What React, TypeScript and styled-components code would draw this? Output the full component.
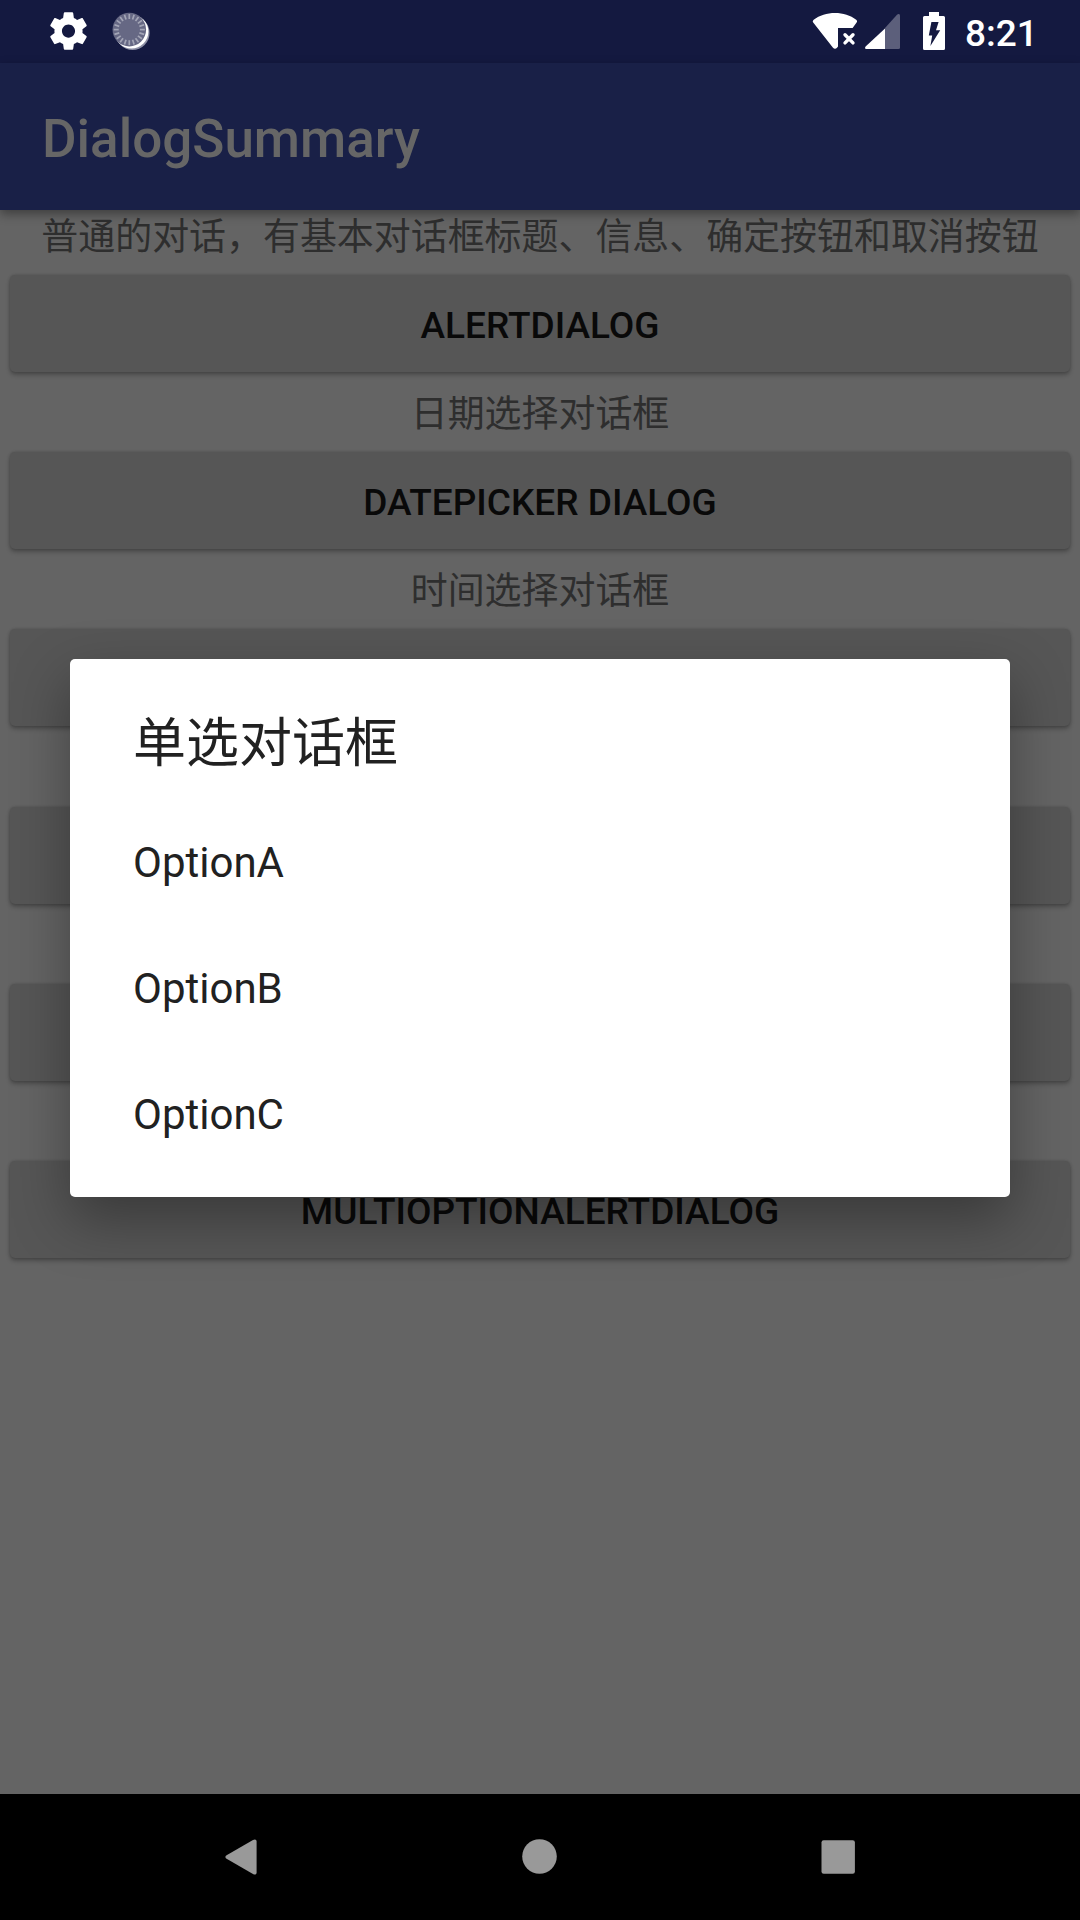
import React from "react";
import styled, { createGlobalStyle } from "styled-components";

const GlobalStyle = createGlobalStyle`
  * { box-sizing: border-box; }
  body {
    margin: 0;
    background: #646464;
    font-family: Roboto, "Noto Sans CJK SC", sans-serif;
  }
`;

const Screen = styled.div`
  position: relative;
  display: flex;
  flex-direction: column;
  width: 1080px;
  height: 1920px;
  overflow: hidden;
  background: #646464;
`;

const StatusBar = styled.header`
  display: flex;
  align-items: flex-start;
  height: 63px;
  padding: 8px 43px 0 46px;
  background: #141940;
`;

const StatusGroup = styled.div<{ $end?: boolean }>`
  display: flex;
  align-items: flex-start;
  margin-left: ${(p) => (p.$end ? "auto" : "0")};
`;

const Glyph = styled.svg<{ $w: number; $h: number; $left?: number }>`
  display: block;
  flex: none;
  width: ${(p) => p.$w}px;
  height: ${(p) => p.$h}px;
  margin-left: ${(p) => p.$left ?? 0}px;
`;

const Clock = styled.span`
  width: 72px;
  margin-left: 19px;
  color: #fff;
  font-size: 37px;
  font-weight: 500;
  line-height: 51px;
  white-space: nowrap;
`;

const AppBar = styled.div`
  display: flex;
  align-items: center;
  position: relative;
  height: 147px;
  padding: 4px 42px 0;
  background: #192047;
  box-shadow: 0 4px 10px rgba(0, 0, 0, 0.38);
`;

const AppTitle = styled.h1`
  margin: 0;
  color: #666;
  font-size: 53px;
  font-weight: 500;
  line-height: 62px;
`;

const Content = styled.main`
  display: flex;
  flex: 1;
  flex-direction: column;
  margin-top: -2px;
  padding: 0 10px;
`;

const Entry = styled.section`
  display: flex;
  flex-direction: column;
  height: 177.2px;
`;

const Label = styled.div`
  height: 67px;
  padding-top: 4px;
  color: #2e2e2e;
  font-size: 36.95px;
  line-height: 51px;
  text-align: center;
  white-space: nowrap;
`;

const RaisedButton = styled.button`
  height: 97px;
  padding: 5px 0 0;
  border: 0;
  border-radius: 5px;
  background: #565656;
  box-shadow: 0 3px 4px rgba(0, 0, 0, 0.25), 0 0 3px rgba(0, 0, 0, 0.18);
  color: #090909;
  font-family: inherit;
  font-size: 37px;
  font-weight: 500;
  line-height: 44px;
`;

const NavBar = styled.nav`
  display: flex;
  align-items: center;
  justify-content: space-between;
  height: 126px;
  padding: 0 222px;
  background: #000;
`;

const Dialog = styled.div`
  position: absolute;
  top: 659px;
  left: 70px;
  width: 940px;
  height: 538px;
  border-radius: 5px;
  background: #fff;
  color: #212121;
  box-shadow: 0 22px 56px rgba(0, 0, 0, 0.34);
`;

const DialogTitle = styled.h2`
  height: 140px;
  margin: 0;
  padding: 46px 63px 0;
  font-size: 53px;
  font-weight: 400;
  line-height: 78px;
`;

const OptionList = styled.ul`
  margin: 0;
  padding: 0;
  list-style: none;
`;

const Option = styled.li`
  display: flex;
  align-items: center;
  height: 126px;
  padding: 0 63px;
  font-size: 42px;
`;

const entries = [
  { label: "普通的对话，有基本对话框标题、信息、确定按钮和取消按钮", button: "ALERTDIALOG" },
  { label: "日期选择对话框", button: "DATEPICKER DIALOG" },
  { label: "时间选择对话框", button: "" },
  { label: "", button: "" },
  { label: "", button: "" },
  { label: "", button: "MULTIOPTIONALERTDIALOG" },
];

const ticks = Array.from({ length: 20 }, (_, i) => i * 18);

const SettingsGlyph = () => (
  <Glyph $w={45} $h={45} viewBox="0 -0.3 24 24" fill="#fff">
    <path d="M19.43 12.98c.04-.32.07-.64.07-.98s-.03-.66-.07-.98l2.11-1.65c.19-.15.24-.42.12-.64l-2-3.46c-.12-.22-.39-.3-.61-.22l-2.49 1c-.52-.4-1.08-.73-1.69-.98l-.38-2.65C14.46 2.18 14.25 2 14 2h-4c-.25 0-.46.18-.49.42l-.38 2.65c-.61.25-1.17.59-1.69.98l-2.49-1c-.23-.09-.49 0-.61.22l-2 3.46c-.13.22-.07.49.12.64l2.11 1.65c-.04.32-.07.65-.07.98s.03.66.07.98l-2.11 1.65c-.19.15-.24.42-.12.64l2 3.46c.12.22.39.3.61.22l2.49-1c.52.4 1.08.73 1.69.98l.38 2.65c.03.24.24.42.49.42h4c.25 0 .46-.18.49-.42l.38-2.65c.61-.25 1.17-.59 1.69-.98l2.49 1c.23.09.49 0 .61-.22l2-3.46c.12-.22.07-.49-.12-.64l-2.11-1.65zM12 15.5c-1.93 0-3.5-1.57-3.5-3.5s1.57-3.5 3.5-3.5 3.5 1.57 3.5 3.5-1.57 3.5-3.5 3.5z" />
  </Glyph>
);

const SyncGlyph = () => (
  <Glyph $w={45} $h={45} $left={17} viewBox="108 8 45 45">
    <circle cx="132.6" cy="33" r="17" fill="#8d8fa5" />
    <circle cx="131.4" cy="31.6" r="17" fill="#fff" />
    <circle cx="129.3" cy="29.6" r="16.8" fill="#666884" />
    {ticks.map((a) => (
      <line
        key={a}
        x1="129.3"
        y1="14"
        x2="129.3"
        y2="19"
        stroke="#a3a5b6"
        strokeWidth="1.7"
        transform={`rotate(${a} 129.3 29.6)`}
      />
    ))}
  </Glyph>
);

const WifiGlyph = () => (
  <Glyph $w={46} $h={42} viewBox="812 8 46 42">
    <path
      d="M813.2 22.6C812.5 21.6 812.7 20.6 813.7 19.8C819.5 15.3 827 13 835 13S850.5 15.3 856.2 19.8C857.2 20.6 857.4 21.6 856.6 22.6L852.6 28H838V46.4L837 47.8C835.8 49.2 834.2 49.2 833 47.8Z"
      fill="#fff"
    />
    <path d="M845 34.7L853 42.9M853 34.7L845 42.9" stroke="#fff" strokeWidth="3.4" strokeLinecap="round" />
  </Glyph>
);

const SignalGlyph = () => (
  <Glyph $w={36} $h={42} $left={7} viewBox="865 8 36 42">
    <path d="M885 28L897 14.8C898.3 13.4 900 13.9 900 15.8V47.5Q900 49 898.5 49H885Z" fill="#5c5f7b" />
    <path d="M885 28.6V49H866.5C865 49 864.6 47.6 865.6 46.4Z" fill="#fff" />
  </Glyph>
);

const BatteryGlyph = () => (
  <Glyph $w={23} $h={42} $left={22} viewBox="923 8 23 42">
    <path
      fillRule="evenodd"
      d="M929 12H939V16H943.5Q945 16 945 17.5V48.5Q945 50 943.5 50H924.5Q923 50 923 48.5V17.5Q923 16 924.5 16H929ZM931.4 22H938.6L936 30.2H940.2L930.4 46L932.2 35.4H928.8Z"
      fill="#fff"
    />
  </Glyph>
);

export default function App() {
  return (
    <>
      <GlobalStyle />
      <Screen>
        <StatusBar>
          <StatusGroup>
            <SettingsGlyph />
            <SyncGlyph />
          </StatusGroup>
          <StatusGroup $end>
            <WifiGlyph />
            <SignalGlyph />
            <BatteryGlyph />
            <Clock>8:21</Clock>
          </StatusGroup>
        </StatusBar>
        <AppBar>
          <AppTitle>DialogSummary</AppTitle>
        </AppBar>
        <Content>
          {entries.map((entry, i) => (
            <Entry key={i}>
              <Label>{entry.label}</Label>
              <RaisedButton>{entry.button}</RaisedButton>
            </Entry>
          ))}
        </Content>
        <NavBar>
          <Glyph $w={36} $h={40} viewBox="222 1837 36 40">
            <path
              d="M226.6 1855.2L253 1840C255 1838.9 256.6 1839.5 256.6 1841.6V1872.4C256.6 1874.5 255 1875.1 253 1874L226.6 1858.8C225 1857.8 225 1856.2 226.6 1855.2Z"
              fill="#999"
            />
          </Glyph>
          <Glyph $w={36} $h={40} viewBox="521 1837 36 40">
            <circle cx="539.5" cy="1856.5" r="17.3" fill="#999" />
          </Glyph>
          <Glyph $w={38} $h={40} viewBox="820 1837 38 40">
            <rect x="821.5" y="1840.3" width="33.4" height="33.4" rx="2.2" fill="#999" />
          </Glyph>
        </NavBar>
        <Dialog role="dialog">
          <DialogTitle>单选对话框</DialogTitle>
          <OptionList>
            <Option>OptionA</Option>
            <Option>OptionB</Option>
            <Option>OptionC</Option>
          </OptionList>
        </Dialog>
      </Screen>
    </>
  );
}
